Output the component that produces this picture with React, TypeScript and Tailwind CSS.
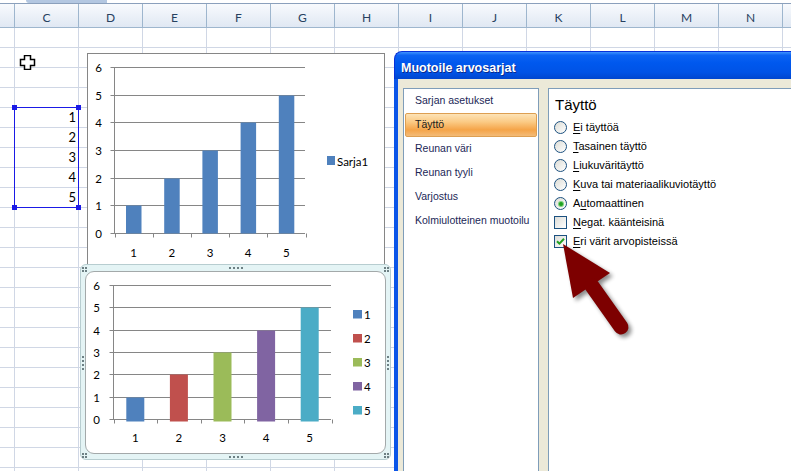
import React from 'react';

const cols = ['', 'C', 'D', 'E', 'F', 'G', 'H', 'I', 'J', 'K', 'L', 'M', 'N', ''];
const cellValues: Record<number, number> = { 4: 1, 5: 2, 6: 3, 7: 4, 8: 5 };
const barColors = ['#4f81bd', '#c0504d', '#9bbb59', '#8064a2', '#4bacc6'];

const Sheet: React.FC = () => (
  <div className="flex flex-col">
    <div className="relative h-[4px] border-b border-[#8ba0bc] bg-white">
      <div className="absolute left-[26px] top-0 h-[3px] w-[81px] rounded-bl-[3px] bg-[#b3c7e1]" />
    </div>
    <div className="flex h-[24px] border-b border-[#9eb6ce] bg-linear-to-b from-[#f8fafd] to-[#e0e8f3]">
      {cols.map((c, i) => (
        <div
          key={i}
          className={`${i === 0 ? 'w-[15px]' : 'w-[64px]'} flex shrink-0 items-center justify-center border-r border-[#9eb6ce] pt-[5px] text-[12px] text-[#27415f]`}
        >
          {c}
        </div>
      ))}
    </div>
    {Array.from({ length: 23 }).map((_, r) => (
      <div key={r} className="flex h-[20px] border-b border-[#d0d7e5]">
        {cols.map((_, i) => (
          <div
            key={i}
            className={`${i === 0 ? 'w-[15px]' : 'w-[64px]'} flex shrink-0 items-center justify-end border-r border-[#d0d7e5] pr-[2px] text-[13px] text-black`}
          >
            {i === 1 && cellValues[r] ? cellValues[r] : null}
          </div>
        ))}
      </div>
    ))}
  </div>
);

const Chart1: React.FC = () => {
  const y = (v: number) => Math.round(179 - v * 27.67) + 0.5;
  const x0 = 26.5;
  const cw = 38.2;
  return (
    <div className="absolute left-[87px] top-[53px] h-[216px] w-[298px] border border-[#868686] bg-white font-['Lato',sans-serif] text-[11.5px]">
      <svg width="296" height="214" className="block">
        {[1, 2, 3, 4, 5, 6].map((v) => (
          <line key={v} x1={x0 - 4} x2={217} y1={y(v)} y2={y(v)} stroke="#868686" />
        ))}
        <line x1={x0} x2={x0} y1={y(6)} y2={y(0)} stroke="#868686" />
        <line x1={x0 - 4} x2={217} y1={y(0)} y2={y(0)} stroke="#868686" />
        {[0, 1, 2, 3, 4, 5].map((i) => (
          <line key={i} x1={Math.round(x0 + cw * i) + 0.5} x2={Math.round(x0 + cw * i) + 0.5} y1={y(0)} y2={y(0) + 4} stroke="#868686" />
        ))}
        {[1, 2, 3, 4, 5].map((v, i) => (
          <rect key={v} x={x0 + cw * i + 11.5} y={y(v)} width={15.5} height={y(0) - y(v)} fill="#4f81bd" />
        ))}
        <g fill="#000">
          {[0, 1, 2, 3, 4, 5, 6].map((v) => (
            <text key={v} x={14} y={y(v)} textAnchor="end" dominantBaseline="central">
              {v}
            </text>
          ))}
          {[1, 2, 3, 4, 5].map((v, i) => (
            <text key={v} x={x0 + cw * (i + 0.5)} y={198} textAnchor="middle" dominantBaseline="central">
              {v}
            </text>
          ))}
          <rect x={239} y={102} width={8} height={9} fill="#4f81bd" />
          <text x={249} y={107} dominantBaseline="central">
            Sarja1
          </text>
        </g>
      </svg>
    </div>
  );
};

const Dot: React.FC = () => <span className="block h-[2px] w-[2px] bg-[#6d8084]" />;

const CornerDots: React.FC<{ className: string }> = ({ className }) => (
  <div className={`absolute grid grid-cols-2 gap-[1px] ${className}`}>
    <Dot />
    <Dot />
    <Dot />
    <Dot />
  </div>
);

const Chart2: React.FC = () => {
  const y = (v: number) => Math.round(147 - v * 22.33) + 0.5;
  const x0 = 27.5;
  const cw = 43.6;
  return (
    <div className="absolute left-[80px] top-[264px] h-[196px] w-[311px] rounded-[6px] border border-[#b7cdd0] bg-[#e4f4f5] pb-[5px] pl-[4px] pr-[4px] pt-[6px]">
      <div className="h-full rounded-[9px] border border-[#a3a9aa] bg-white font-['Lato',sans-serif] text-[11.5px]">
        <svg width="299" height="181" className="block">
          {[1, 2, 3, 4, 5, 6].map((v) => (
            <line key={v} x1={x0 - 4} x2={245} y1={y(v)} y2={y(v)} stroke="#868686" />
          ))}
          <line x1={x0} x2={x0} y1={y(6)} y2={y(0)} stroke="#868686" />
          <line x1={x0 - 4} x2={245} y1={y(0)} y2={y(0)} stroke="#868686" />
          {[0, 1, 2, 3, 4, 5].map((i) => (
            <line key={i} x1={Math.round(x0 + cw * i) + 0.5} x2={Math.round(x0 + cw * i) + 0.5} y1={y(0)} y2={y(0) + 4} stroke="#868686" />
          ))}
          {[1, 2, 3, 4, 5].map((v, i) => (
            <rect key={v} x={x0 + cw * i + 12.8} y={y(v)} width={18} height={y(0) - y(v) + 2} fill={barColors[i]} />
          ))}
          <g fill="#000">
            {[0, 1, 2, 3, 4, 5, 6].map((v) => (
              <text key={v} x={14} y={y(v)} textAnchor="end" dominantBaseline="central">
                {v}
              </text>
            ))}
            {[1, 2, 3, 4, 5].map((v, i) => (
              <text key={v} x={x0 + cw * (i + 0.5)} y={165} textAnchor="middle" dominantBaseline="central">
                {v}
              </text>
            ))}
            {[1, 2, 3, 4, 5].map((v, i) => (
              <g key={v}>
                <rect x={267} y={38 + i * 24} width={9} height={8.5} fill={barColors[i]} />
                <text x={278} y={42 + i * 24} dominantBaseline="central">
                  {v}
                </text>
              </g>
            ))}
          </g>
        </svg>
      </div>
      <div className="absolute left-[148px] top-[2px] flex gap-[2px]">
        <Dot /><Dot /><Dot /><Dot />
      </div>
      <div className="absolute bottom-[1px] left-[148px] flex gap-[2px]">
        <Dot /><Dot /><Dot /><Dot />
      </div>
      <div className="absolute left-[1px] top-[91px] flex flex-col gap-[2px]">
        <Dot /><Dot /><Dot /><Dot />
      </div>
      <div className="absolute right-[1px] top-[91px] flex flex-col gap-[2px]">
        <Dot /><Dot /><Dot /><Dot />
      </div>
      <CornerDots className="left-[1px] top-[2px]" />
      <CornerDots className="right-[1px] top-[2px]" />
      <CornerDots className="bottom-[1px] left-[1px]" />
      <CornerDots className="bottom-[1px] right-[1px]" />
    </div>
  );
};

const Radio: React.FC<{ on?: boolean }> = ({ on }) => (
  <span className="relative block h-[13px] w-[13px] shrink-0 rounded-full border border-[#1c5180] bg-linear-to-br from-[#dcdcd5] to-white">
    {on && <span className="absolute left-[3.5px] top-[3.5px] h-[4px] w-[4px] rounded-full bg-[#21a121] shadow-[0_0_0_1px_#7fd27f]" />}
  </span>
);

const Check: React.FC<{ on?: boolean }> = ({ on }) => (
  <span className="relative block h-[13px] w-[13px] shrink-0 border border-[#1c5180] bg-linear-to-br from-[#dcdcd7] to-white">
    {on && (
      <svg className="absolute left-[1px] top-[1px]" width="9" height="9" viewBox="0 0 9 9">
        <path d="M1 4.2 L3.4 6.6 L8 1.8" stroke="#21a121" strokeWidth="2" fill="none" />
      </svg>
    )}
  </span>
);

type Opt = { kind: 'radio' | 'check'; pre: string; u: string; post: string; on?: boolean };

const options: Opt[] = [
  { kind: 'radio', pre: '', u: 'E', post: 'i täyttöä' },
  { kind: 'radio', pre: '', u: 'T', post: 'asainen täyttö' },
  { kind: 'radio', pre: '', u: 'L', post: 'iukuväritäyttö' },
  { kind: 'radio', pre: '', u: 'K', post: 'uva tai materiaalikuviotäyttö' },
  { kind: 'radio', pre: 'A', u: 'u', post: 'tomaattinen', on: true },
  { kind: 'check', pre: '', u: 'N', post: 'egat. käänteisinä' },
  { kind: 'check', pre: '', u: 'E', post: 'ri värit arvopisteissä', on: true },
];

const listItems = ['Sarjan asetukset', 'Täyttö', 'Reunan väri', 'Reunan tyyli', 'Varjostus', 'Kolmiulotteinen muotoilu'];

const Dialog: React.FC = () => (
  <div className="absolute left-[394px] top-[51px] flex h-[440px] w-[420px] flex-col font-['Liberation_Sans',Arial,sans-serif]">
    <div className="flex h-[28px] shrink-0 items-center rounded-tl-[8px] border-l border-t border-[#0831d9] bg-[linear-gradient(to_bottom,#3e93ff_0%,#0d63f2_12%,#0058ee_40%,#0053e6_75%,#0046cf_100%)] pl-[6px] pt-[5px] text-[12.5px] font-bold text-white [text-shadow:1px_1px_0_#0a2a8c]">
      Muotoile arvosarjat
    </div>
    <div className="flex flex-1 gap-[9px] border-l-[4px] border-[#0b55e8] bg-[#ece9d8] pl-[5px] pt-[9px]">
      <div className="w-[136px] shrink-0 border border-[#7f9db9] bg-white text-[10.5px] text-[#1b2757]">
        {listItems.map((t, i) =>
          i === 1 ? (
            <div
              key={t}
              className="ml-[1px] mr-[1px] flex h-[24px] items-center rounded-[2px] border border-[#dd9f52] bg-[linear-gradient(to_bottom,#fde3b6_0%,#fbcb86_35%,#f5a448_72%,#f3bb78_100%)] pl-[9px] text-[#1a1a1a]"
            >
              {t}
            </div>
          ) : (
            <div key={t} className="flex h-[24px] items-center pl-[11px]">
              {t}
            </div>
          ),
        )}
      </div>
      <div className="flex-1 border border-[#7f9db9] bg-white pl-[5px] text-[11px] text-black">
        <div className="h-[29px] pl-[1px] pt-[6px] text-[15px] leading-[20px]">Täyttö</div>
        {options.map((o, i) => (
          <div key={i} className="flex h-[19px] items-center gap-[6px]">
            {o.kind === 'radio' ? <Radio on={o.on} /> : <Check on={o.on} />}
            <span>
              {o.pre}
              <u className="underline-offset-[2px]">{o.u}</u>
              {o.post}
            </span>
          </div>
        ))}
      </div>
    </div>
  </div>
);

const Arrow: React.FC = () => (
  <svg className="absolute left-[540px] top-[230px]" width="110" height="120" viewBox="0 0 110 120">
    <defs>
      <filter id="arrowShadow" x="-30%" y="-30%" width="160%" height="160%">
        <feGaussianBlur stdDeviation="2" />
      </filter>
    </defs>
    <g transform="translate(3 3)" opacity="0.45" filter="url(#arrowShadow)">
      <polygon points="23,14 70,43 33,68" fill="#000" />
      <line x1="52" y1="56" x2="81" y2="97" stroke="#000" strokeWidth="15" strokeLinecap="round" />
    </g>
    <polygon points="23,14 70,43 33,68" fill="#7d0000" />
    <line x1="52" y1="56" x2="81" y2="97" stroke="#7d0000" strokeWidth="15" strokeLinecap="round" />
  </svg>
);

const Cursor: React.FC = () => (
  <svg className="absolute left-[19px] top-[55px]" width="17" height="15" viewBox="0 0 17 15">
    <path d="M5.5 0.5 H11.5 V4.5 H15.5 V10.5 H11.5 V14.5 H5.5 V10.5 H1.5 V4.5 H5.5 Z" fill="#fff" stroke="#000" strokeWidth="1.5" />
  </svg>
);

export default function App() {
  return (
    <div className="relative h-[471px] w-[791px] overflow-hidden bg-white font-['Lato',sans-serif]">
      <Sheet />
      <div className="absolute left-[14px] top-[107px] h-[101px] w-[65px] border border-[#1a1ae6]" />
      <div className="absolute left-[12px] top-[105px] h-[5px] w-[5px] bg-[#1a1ae6]" />
      <div className="absolute left-[76px] top-[105px] h-[5px] w-[5px] bg-[#1a1ae6]" />
      <div className="absolute left-[12px] top-[205px] h-[5px] w-[5px] bg-[#1a1ae6]" />
      <div className="absolute left-[76px] top-[205px] h-[5px] w-[5px] bg-[#1a1ae6]" />
      <Cursor />
      <Chart1 />
      <Chart2 />
      <Dialog />
      <Arrow />
    </div>
  );
}
